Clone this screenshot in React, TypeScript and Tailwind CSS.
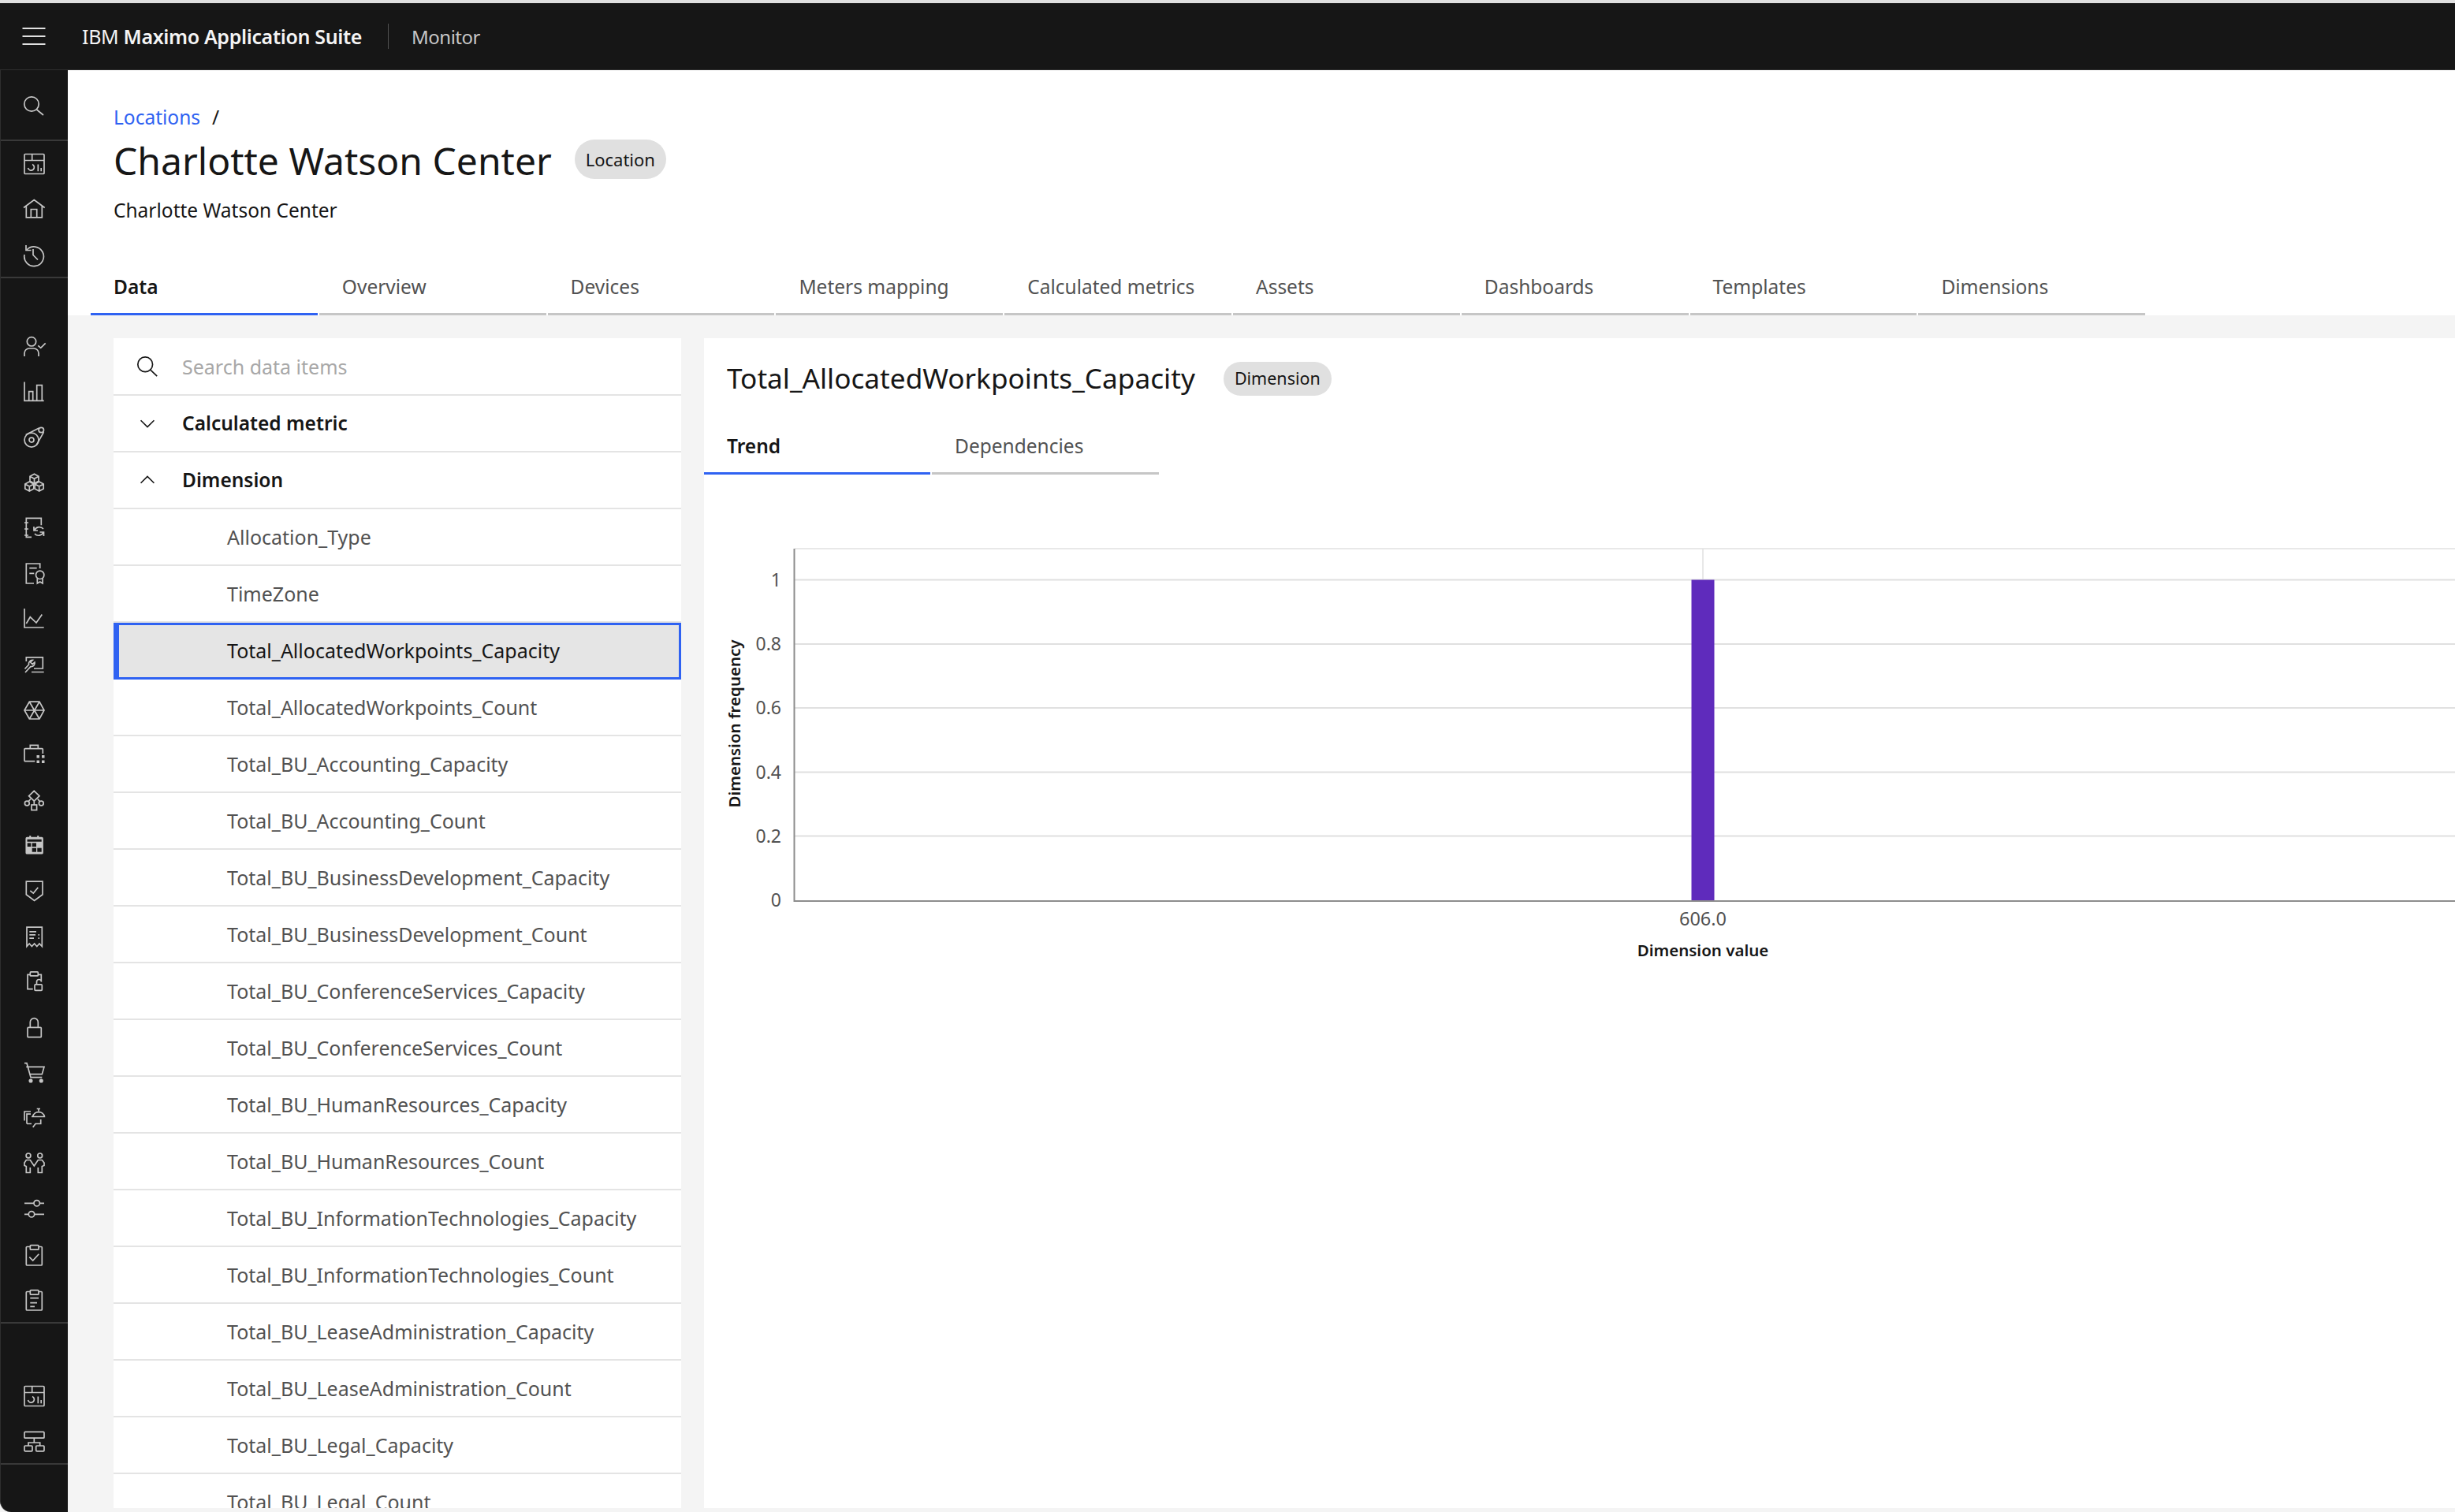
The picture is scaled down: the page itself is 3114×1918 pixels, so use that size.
import React from "react";

const S = ({ children }: { children: React.ReactNode }) => (
  <svg viewBox="0 0 32 32" className="w-[32px] h-[32px] text-[#c6c6c6]" fill="none" stroke="currentColor" strokeWidth={1.7}>
    {children}
  </svg>
);

const Gauge = () => (
  <S>
    <rect x="2" y="3.5" width="25" height="25" rx="1" />
    <path d="M2 11.5H27M11.7 3.5V11.5" />
    <path d="M6.5 21a4 4 0 1 0 5.5-4.5M19.3 16.5V25.3M23.2 21V25.3" />
  </S>
);

const Cube = ({ x, y }: { x: number; y: number }) => (
  <path d={`M${x} ${y - 6}l5.5 3v6l-5.5 3l-5.5-3v-6zM${x - 5.5} ${y - 3}l5.5 3l5.5-3M${x} ${y}v6`} />
);

const Clip = () => <rect x="9.3" y="3.7" width="10.7" height="5.5" rx="1" fill="#161616" />;

const icons: React.ReactNode[] = [
  <S key="a"><circle cx="11" cy="9.3" r="5.7" /><path d="M2 28V24a6 6 0 0 1 6-6h6a6 6 0 0 1 6 6v4M19.3 14.3l3.4 3l6-6" /></S>,
  <S key="b"><path d="M2 3.4V27.4H26.7" /><path d="M7.7 27.4V15.7H12.7V27.4M17.7 27.4V7.7H24.3V27.4" /></S>,
  <S key="c"><circle cx="11" cy="19.1" r="9" /><circle cx="11" cy="19.1" r="3" /><circle cx="23.3" cy="6.5" r="3.2" /><path d="M3.7 12.5L20.5 4.1M17 25.8L26.5 9.1" /></S>,
  <S key="d"><Cube x={14.5} y={10.2} /><Cube x={8.3} y={20} /><Cube x={20.7} y={20} /></S>,
  <S key="e"><path d="M23.3 12.3V3.3H4.3V27.3H11M2 9H7M2 17H7M2 25H7" /><path d="M14 14V19H19M14.8 19A6.5 6.5 0 0 1 26 17M26.5 26V21H21.5M26 21A6.5 6.5 0 0 1 15 23" /></S>,
  <S key="f"><path d="M21.7 9V3H4.3V28H14M8.3 8.7H17.7M8.3 15.3H14.3" /><circle cx="21.7" cy="17.3" r="5.2" /><path d="M18.3 21.5V28l3.4-2l3.4 2V21.5" /></S>,
  <S key="g"><path d="M2 3V27H26.7" /><path d="M4.3 22L9.3 13.7L17 21L24.3 10.4" /></S>,
  <S key="h"><path d="M4.3 12V6.8H25.3V21H14M11 25.5H26.7" /><path d="M3 26L10 18.5a4.5 4.5 0 0 0 5-5.5L12.2 15.6L9.6 13L12.4 10.4a4.5 4.5 0 0 0-4.8 5.6L2.5 21.5" /></S>,
  <S key="i"><path d="M8.3 5.2H21L27 16L21 27H8.3L2 16ZM8.3 5.2L21 27M21 5.2L8.3 27M2 16H27" /></S>,
  <S key="j"><path d="M15.3 23.6H3a1 1 0 0 1-1-1V8.6a1 1 0 0 1 1-1H24.3a1 1 0 0 1 1 1V14M9.3 7.6V3.3H19.3V7.6" /><g fill="currentColor" stroke="none"><rect x="17.5" y="16" width="3.5" height="3.5" /><rect x="24" y="16" width="3.5" height="3.5" /><rect x="17.5" y="22.5" width="3.5" height="3.5" /><rect x="24" y="22.5" width="3.5" height="3.5" /></g></S>,
  <S key="k"><path d="M14.3 3.3L21 9.7L14.3 16L7.6 9.7ZM14.3 16V21M9.8 13.5L7.3 16.5M18.8 13.5L21.3 16.5" /><circle cx="5.3" cy="19" r="2.9" /><circle cx="23.3" cy="19" r="2.9" /><rect x="11" y="21" width="6.6" height="6.6" /></S>,
  <S key="l"><path d="M9.3 3V7M19.3 3V7" /><rect x="4.3" y="5.7" width="20.7" height="20" rx="1" fill="currentColor" /><g fill="#161616" stroke="none"><rect x="5.5" y="7.7" width="18.2" height="3" /><rect x="5.7" y="12.4" width="4.6" height="4.6" /><rect x="11.7" y="12.4" width="5.3" height="4.6" /><rect x="11.7" y="18.7" width="5.3" height="5" /><rect x="18.3" y="18.7" width="5.4" height="5" /></g><path d="M9.3 3V7M19.3 3V7" /></S>,
  <S key="m"><path d="M4.3 3.1H25V19.8L14.6 27.5L4.3 19.8Z" /><path d="M9.3 14.8L13.3 18.1L19.3 10.8" /></S>,
  <S key="n"><path d="M5 27.5V3.2H24.3V27.5L21 24L17.8 27.5L14.6 24L11.4 27.5L8.2 24Z" /><path d="M8.3 8.9H17M8.3 12.9H16M8.3 17.2H14M19.5 12.9h1.5M19.5 17.2h1.5" /></S>,
  <S key="o"><path d="M12.7 24.6H6V6.3H9.3M19.3 6.3H23.3V14" /><rect x="9.3" y="2.9" width="10" height="5" rx="1" /><rect x="15" y="18.9" width="9.3" height="7.4" rx="1" /><path d="M17.5 18.9V15.5a3 3 0 0 1 6 0" /></S>,
  <S key="p"><rect x="6" y="15.3" width="17.3" height="12.4" rx="1" /><path d="M9.3 15.3V8.7a5 5 0 0 1 10 0V15.3" /></S>,
  <S key="q"><path d="M2 3.7H5L10 21.7H24.3M4.3 8.4H27L24.3 17.7H8.3" /><circle cx="10" cy="26" r="1.7" fill="currentColor" /><circle cx="23.3" cy="26" r="1.7" fill="currentColor" /></S>,
  <S key="r"><path d="M2 18.5V7H10M5 22.5V10.2H10M5 22.5H11M22.7 17V22.5H16L12.7 27" /><path d="M12.5 13.5a7.7 7.7 0 0 1 15 0M11 13.5H28.3M17.7 3.5H22M20 3.5V6.5" /></S>,
  <S key="s"><circle cx="7" cy="5.9" r="2.9" /><circle cx="21.7" cy="5.9" r="2.9" /><path d="M9.3 21V27.5H4.3V19.5L2 18.5V15L4.3 11.5H9.3L14.3 19L19.3 11.5H24.3L27 15V18.5L24.3 19.5V27.5H19.3V21" /></S>,
  <S key="t"><path d="M2 8.3H14M21.4 8.3H27M2 22.3H7.3M14.7 22.3H27" /><circle cx="17.7" cy="8.3" r="3.7" /><circle cx="11" cy="22.3" r="3.7" /></S>,
  <S key="u"><rect x="4.3" y="5.5" width="20" height="23.5" rx="1" /><Clip /><path d="M8.3 18.6L12.7 23L20.3 14.7" /></S>,
  <S key="v"><rect x="4.3" y="5.5" width="20" height="23.5" rx="1" /><Clip /><path d="M9.3 13.7H20M9.3 19.6H18M9.3 24.3H15" /></S>,
];

const Item = ({ children }: { children: React.ReactNode }) => (
  <div className="h-[57.6px] pl-[3px] flex items-center justify-center shrink-0">{children}</div>
);

const Sidebar = () => (
  <aside className="w-[86px] shrink-0 bg-[#161616] flex flex-col rounded-bl-[14px] border-l border-[#2e2e2e] overflow-hidden">
    <div className="h-[90px] shrink-0 pl-[3px] flex items-center justify-center border-b-2 border-[#393939]">
      <S>
        <circle cx="11" cy="15" r="9.2" />
        <path d="M17.5 22L26 29" />
      </S>
    </div>
    <div className="h-[174px] shrink-0 border-b-2 border-[#393939]">
      <Item><Gauge /></Item>
      <Item>
        <S><path d="M1 14.5L14.3 4.5L27.7 14.5M4.3 12V26.8H24.3V12M10.3 26.8V16.5H17.7V26.8" /></S>
      </Item>
      <Item>
        <S><path d="M4 4V10.5H10.5" /><path d="M5 10A12.3 12.3 0 1 1 2 16" /><path d="M13 9V16.5L19 22.5" /></S>
      </Item>
    </div>
    <div className="h-[1326px] shrink-0 pt-[58px] border-b-2 border-[#393939]">
      {icons.map((ic, i) => (
        <Item key={i}>{ic}</Item>
      ))}
    </div>
    <div className="h-[179px] shrink-0 pt-[63px] border-b-2 border-[#393939]">
      <Item><Gauge /></Item>
      <Item>
        <S><rect x="2" y="4.4" width="25" height="7.8" rx="1" /><path d="M14.3 12.2V18M7 22V18H21.7V22" /><rect x="2" y="22" width="10" height="6.8" rx="1" /><rect x="16.7" y="22" width="10.3" height="6.8" rx="1" /></S>
      </Item>
    </div>
  </aside>
);

const tabs = ["Data", "Overview", "Devices", "Meters mapping", "Calculated metrics", "Assets", "Dashboards", "Templates", "Dimensions"];

const rows = [
  "Allocation_Type",
  "TimeZone",
  "Total_AllocatedWorkpoints_Capacity",
  "Total_AllocatedWorkpoints_Count",
  "Total_BU_Accounting_Capacity",
  "Total_BU_Accounting_Count",
  "Total_BU_BusinessDevelopment_Capacity",
  "Total_BU_BusinessDevelopment_Count",
  "Total_BU_ConferenceServices_Capacity",
  "Total_BU_ConferenceServices_Count",
  "Total_BU_HumanResources_Capacity",
  "Total_BU_HumanResources_Count",
  "Total_BU_InformationTechnologies_Capacity",
  "Total_BU_InformationTechnologies_Count",
  "Total_BU_LeaseAdministration_Capacity",
  "Total_BU_LeaseAdministration_Count",
  "Total_BU_Legal_Capacity",
  "Total_BU_Legal_Count",
];

const Chart = () => {
  const grid = [
    { y: 735.5, l: "1" },
    { y: 817, l: "0.8" },
    { y: 898, l: "0.6" },
    { y: 979.5, l: "0.4" },
    { y: 1060.5, l: "0.2" },
    { y: 1142, l: "0" },
  ];
  const X0 = 893;
  const Y0 = 602;
  return (
    <svg className="block" width="2221" height="640" viewBox={`${X0} ${Y0} 2221 640`}>
      <path d="M1008 696H3114" stroke="#e0e0e0" strokeWidth="1.5" />
      <path d="M2160 696V735" stroke="#e0e0e0" strokeWidth="1.5" />
      {grid.slice(0, 5).map((g) => (
        <path key={g.l} d={`M1008 ${g.y}H3114`} stroke="#e0e0e0" strokeWidth="2" />
      ))}
      {grid.map((g) => (
        <text key={g.l} x="991" y={g.y + 8} textAnchor="end" fontSize="23" fill="#525252" fontFamily="Noto Sans, sans-serif">
          {g.l}
        </text>
      ))}
      <rect x="2145.5" y="735.5" width="29" height="406.5" fill="#5f2bbc" />
      <path d="M1007.5 696V1143H3114" fill="none" stroke="#8d8d8d" strokeWidth="2" />
      <text x="2160" y="1174" textAnchor="middle" fontSize="23.5" fill="#525252" fontFamily="Noto Sans, sans-serif">606.0</text>
      <text x="2160" y="1213" textAnchor="middle" fontSize="20.5" fontWeight="600" fill="#161616" fontFamily="Noto Sans, sans-serif">Dimension value</text>
      <text transform="translate(939 918) rotate(-90)" textAnchor="middle" fontSize="20.5" fontWeight="600" fill="#161616" fontFamily="Noto Sans, sans-serif">Dimension frequency</text>
    </svg>
  );
};

export default function App() {
  return (
    <div className="w-[3114px] h-[1918px] bg-[#f4f4f4] overflow-hidden flex flex-col font-['Noto_Sans',sans-serif]">
      <div className="h-[4px] shrink-0 bg-[#e0e0e0]" />
      <header className="h-[85px] shrink-0 bg-[#161616] flex items-center border-b border-[#2e2e2e]">
        <div className="w-[86px] flex justify-center">
          <svg viewBox="0 0 32 32" className="w-[32px] h-[32px]" stroke="#e0e0e0" strokeWidth="2" fill="none">
            <path d="M1.5 6H30.5M1.5 16H30.5M1.5 26H30.5" />
          </svg>
        </div>
        <div className="ml-[18px] pt-[2px] text-[25px] text-[#f4f4f4] tracking-[-0.35px]">
          IBM <span className="font-semibold">Maximo Application Suite</span>
        </div>
        <div className="ml-[33px] w-px h-[32px] bg-[#525252]" />
        <div className="ml-[29px] pt-[2px] text-[24px] text-[#c6c6c6] tracking-[-0.5px]">Monitor</div>
      </header>
      <div className="flex-1 flex min-h-0">
        <Sidebar />
        <main className="flex-1 min-w-0 flex flex-col">
          <section className="h-[311px] shrink-0 bg-white flex flex-col">
            <div className="pl-[58px] pt-[42px] h-[82px] text-[24.5px] leading-[36px] flex gap-[15px]">
              <span className="text-[#2f62f2]">Locations</span>
              <span className="text-[#161616]">/</span>
            </div>
            <div className="pl-[58px] flex items-center h-[62px]">
              <h1 className="pt-[4px] text-[48px] leading-[62px] text-[#161616] font-normal">Charlotte Watson Center</h1>
              <span className="ml-[29px] w-[116px] h-[50px] rounded-full bg-[#e0e0e0] flex items-center justify-center text-[22px] text-[#161616]">
                Location
              </span>
            </div>
            <div className="pl-[58px] mt-[16px] text-[24.5px] leading-[36px] text-[#161616]">Charlotte Watson Center</div>
            <div className="mt-auto pl-[29px] flex gap-[2px]">
              {tabs.map((t, i) => (
                <div
                  key={t}
                  className={
                    i === 0
                      ? "w-[287.8px] h-[66px] pl-[29px] pt-[12px] text-[24.5px] leading-[36px] font-semibold text-[#161616] border-b-[3px] border-[#2f62f2]"
                      : "w-[287.8px] h-[66px] pl-[29px] pt-[12px] text-[24.5px] leading-[36px] text-[#525252] border-b-[3px] border-[#c6c6c6]"
                  }
                >
                  {t}
                </div>
              ))}
            </div>
          </section>
          <section className="flex-1 min-h-0 flex pt-[29px] pb-[5px] pl-[58px] gap-[29px]">
            <div className="w-[720px] shrink-0 bg-white overflow-hidden">
              <div className="h-[73px] flex items-center border-b-2 border-[#e4e4e4] pl-[28px]">
                <svg viewBox="0 0 32 32" className="w-[30px] h-[30px]" fill="none" stroke="#161616" strokeWidth="1.8">
                  <circle cx="13" cy="13" r="10" />
                  <path d="M20 20.5L29 29" />
                </svg>
                <span className="ml-[29px] pt-[2px] text-[25px] text-[#a8a8a8]">Search data items</span>
              </div>
              {[
                { t: "Calculated metric", open: false },
                { t: "Dimension", open: true },
              ].map((h) => (
                <div key={h.t} className="h-[72px] flex items-center border-b-2 border-[#e4e4e4] pl-[28px]">
                  <svg viewBox="0 0 32 32" className="w-[30px] h-[30px]" fill="none" stroke="#161616" strokeWidth="1.7">
                    <path d={h.open ? "M7 20L16 11L25 20" : "M7 12L16 21L25 12"} />
                  </svg>
                  <span className="ml-[29px] text-[24.5px] font-semibold text-[#161616]">{h.t}</span>
                </div>
              ))}
              {rows.map((r, i) =>
                i === 2 ? (
                  <div key={r} className="h-[72px] flex items-center bg-[#e5e5e5] border-[3px] border-l-[7px] border-[#2f62f2] pl-[137px] text-[25px] text-[#161616]">
                    {r}
                  </div>
                ) : (
                  <div key={r} className="h-[72px] flex items-center border-b-2 border-[#e4e4e4] pl-[144px] pt-[1px] text-[25px] text-[#525252]">
                    {r}
                  </div>
                ),
              )}
            </div>
            <div className="flex-1 min-w-0 bg-white overflow-hidden">
              <div className="h-[102px] flex items-center pl-[29px]">
                <h2 className="pb-[1px] text-[35.2px] text-[#161616] font-normal">Total_AllocatedWorkpoints_Capacity</h2>
                <span className="ml-[36px] w-[137px] h-[43px] rounded-full bg-[#e0e0e0] flex items-center justify-center text-[21.5px] text-[#161616]">
                  Dimension
                </span>
              </div>
              <div className="flex gap-[2px]">
                <div className="w-[287px] h-[71px] pl-[29px] pt-[17px] text-[24.5px] leading-[36px] font-semibold text-[#161616] border-b-[3px] border-[#2f62f2]">Trend</div>
                <div className="w-[288px] h-[71px] pl-[29px] pt-[17px] text-[24.5px] leading-[36px] text-[#525252] border-b-[3px] border-[#c6c6c6]">Dependencies</div>
              </div>
              <Chart />
            </div>
          </section>
        </main>
      </div>
    </div>
  );
}
